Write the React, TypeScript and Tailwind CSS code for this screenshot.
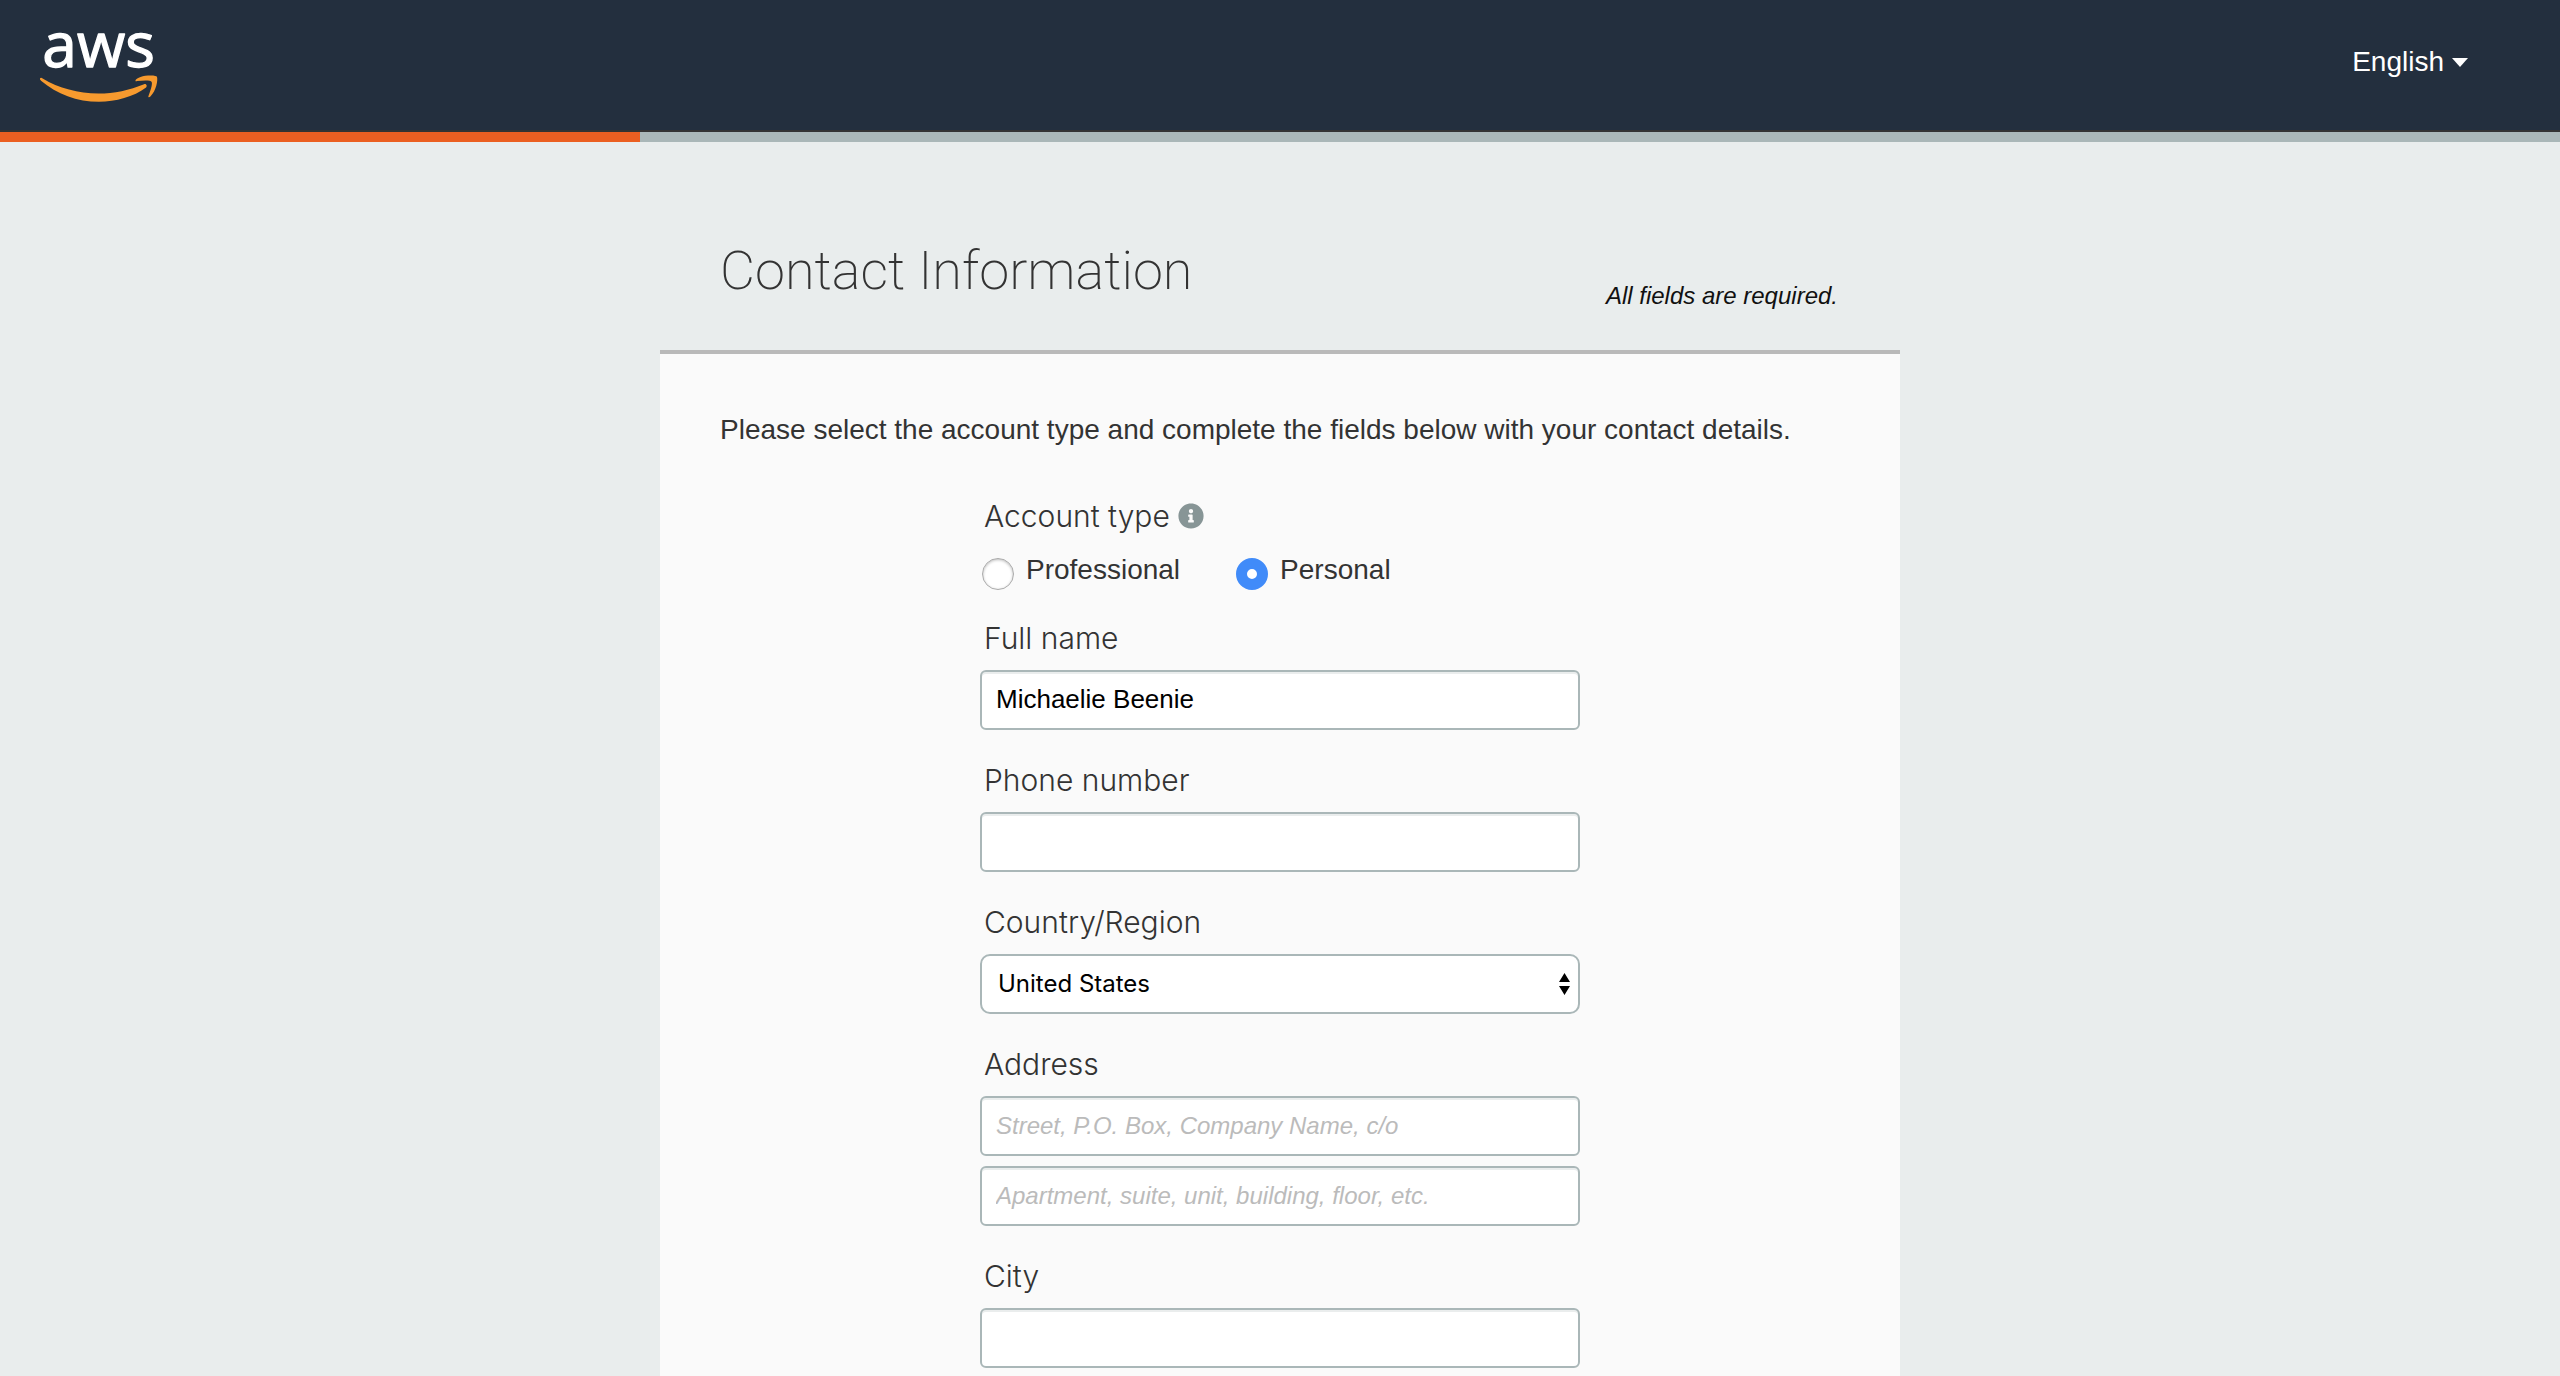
import { useId, useState } from "react";
import { FaInfoCircle } from "react-icons/fa";

function AwsLogo() {
  return (
    <svg viewBox="60 60 356 216" className="h-[72px] w-[118px] overflow-visible" role="img" aria-label="aws">
      <text
        x="67"
        y="172"
        fill="#fff"
        stroke="#fff"
        strokeWidth="4"
        strokeLinejoin="round"
        fontFamily="'Open Sans', sans-serif"
        fontSize="188"
      >
        aws
      </text>
      <path
        fill="#f79a2e"
        d="M60 206C61 203 65 203 68 206C116 235 176 251 236 251C284 251 330 241 374 223C380 221 385 228 380 233C343 261 288 276 238 276C172 276 110 252 64 213C61 211 59 208 60 206Z"
      />
      <path
        fill="#f79a2e"
        d="M348 213C348 208 362 198 386 197C402 196 412 198 413 201C416 210 411 242 393 260C390 263 386 263 387 259C392 246 400 224 397 216C394 210 374 211 353 213C350 214 348 214 348 213Z"
      />
    </svg>
  );
}

const labelClass = "block pl-1 font-['Inter',sans-serif] text-[30px] leading-10 font-light text-[#333]";
const inputClass =
  "block h-[60px] w-full rounded-md border-2 border-[#aab7b8] bg-white px-3.5 pb-0.5 text-[26px] text-black shadow-[inset_0_2px_0_#eaeded] placeholder:text-2xl placeholder:text-[#bbb] placeholder:italic";

type FieldProps = { label: string; lines: { placeholder?: string; value?: string }[] };

function TextField({ label, lines }: FieldProps) {
  const id = useId();
  return (
    <div>
      <label htmlFor={id} className={labelClass}>
        {label}
      </label>
      <div className="mt-3 flex flex-col gap-2.5">
        {lines.map((line, i) => (
          <input
            key={i}
            id={i === 0 ? id : undefined}
            aria-label={i === 0 ? undefined : `${label} line ${i + 1}`}
            type="text"
            defaultValue={line.value}
            placeholder={line.placeholder}
            className={inputClass}
          />
        ))}
      </div>
    </div>
  );
}

function CountryField() {
  const id = useId();
  return (
    <div>
      <label htmlFor={id} className={labelClass}>
        Country/Region
      </label>
      <div className="relative mt-3">
        <select
          id={id}
          className="block h-[60px] w-full appearance-none rounded-[10px] border-2 border-[#aab7b8] bg-white px-4 font-['Inter',sans-serif] text-2xl text-black"
        >
          <option>United States</option>
        </select>
        <svg viewBox="0 0 11 22" className="pointer-events-none absolute top-[19px] right-2.5 h-[22px] w-[11px]">
          <path d="M5.5 0 11 9H0ZM0 13H11L5.5 22Z" />
        </svg>
      </div>
    </div>
  );
}

export default function App() {
  const [type, setType] = useState("Personal");
  return (
    <div className="flex min-h-screen flex-col bg-[#e9eded] font-['Liberation_Sans',Arial,sans-serif]">
      <header className="flex h-[132px] items-start justify-between border-b-2 border-[#333] bg-[#232f3e] pt-[30px] pr-[92px] pl-10">
        <a href="#" aria-label="AWS home">
          <AwsLogo />
        </a>
        <button type="button" className="mt-4 flex items-center gap-2 text-[28px] leading-8 text-white">
          English
          <svg viewBox="0 0 16 9" className="h-[9px] w-4" fill="currentColor">
            <path d="M0 0H16L8 9Z" />
          </svg>
        </button>
      </header>
      <div className="h-2.5 bg-[#aab7b8]" role="progressbar" aria-label="Sign-up progress" aria-valuenow={25}>
        <div className="h-full w-1/4 bg-[#eb5f21]" />
      </div>

      <main className="mx-auto flex w-full max-w-[1240px] flex-1 flex-col pt-[88px]">
        <div className="flex items-end justify-between pr-[62px] pb-[38px] pl-[60px]">
          <h1 className="font-['Roboto',sans-serif] text-[54px] leading-[82px] font-extralight text-[#333]">
            Contact Information
          </h1>
          <p className="text-2xl leading-8 text-[#111] italic">All fields are required.</p>
        </div>

        <form className="flex-1 border-t-4 border-[#b9b9b9] bg-[#fafafa] px-[60px] pt-14 pb-2">
          <p className="text-[28px] leading-10 text-[#333]">
            Please select the account type and complete the fields below with your contact details.
          </p>
          <div className="mx-auto mt-[46px] flex max-w-[600px] flex-col gap-[30px]">
            <fieldset>
              <legend className={labelClass}>
                <span className="flex items-center gap-2">
                  Account type
                  <FaInfoCircle className="size-[26px] text-[#879596]" />
                </span>
              </legend>
              <div className="mt-[18px] flex h-[34px] gap-14 pl-0.5 text-[28px] leading-8 text-[#333]">
                {["Professional", "Personal"].map((name) => (
                  <label key={name} className="flex items-start gap-3">
                    <input
                      type="radio"
                      name="account-type"
                      checked={type === name}
                      onChange={() => setType(name)}
                      className="mt-1 size-8 appearance-none rounded-full border border-[#aaa] bg-white shadow-[inset_0_1px_3px_#bbb] checked:border-[11px] checked:border-[#408bf9] checked:shadow-none"
                    />
                    {name}
                  </label>
                ))}
              </div>
            </fieldset>
            <TextField label="Full name" lines={[{ value: "Michaelie Beenie" }]} />
            <TextField label="Phone number" lines={[{}]} />
            <CountryField />
            <TextField
              label="Address"
              lines={[
                { placeholder: "Street, P.O. Box, Company Name, c/o" },
                { placeholder: "Apartment, suite, unit, building, floor, etc." },
              ]}
            />
            <TextField label="City" lines={[{}]} />
          </div>
        </form>
      </main>
    </div>
  );
}
